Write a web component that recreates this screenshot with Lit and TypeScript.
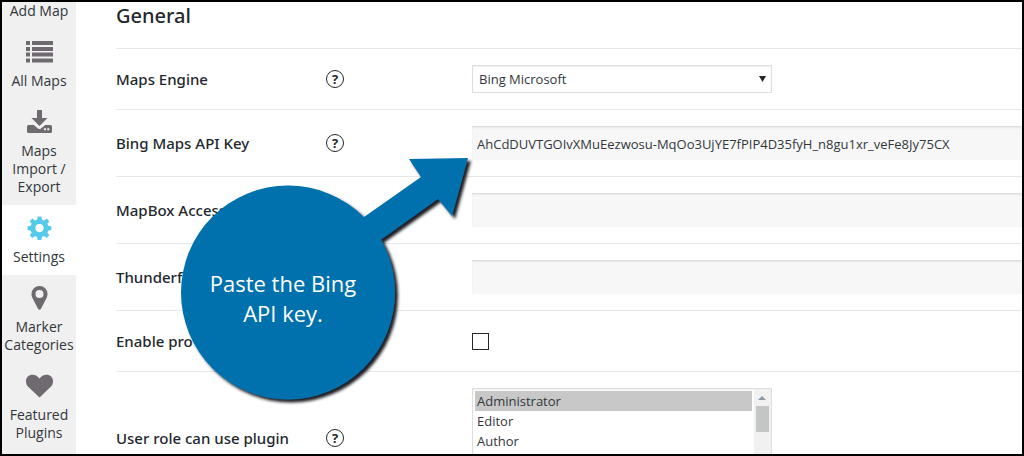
import { LitElement, html, svg, css, nothing, TemplateResult } from "lit";
import { customElement, property } from "lit/decorators.js";

const icons: Record<string, TemplateResult> = {
  list: svg`<path d="M0 1h4v4H0zM0 7h4v4H0zM0 12.500h4v4H0zM0 18.500h4v4H0zM6 1h21v4H6zM6 7h21v4H6zM6 12.500h21v4H6zM6 18.500h21v4H6z"/>`,
  download: svg`<path fill-rule="evenodd" d="M11 0h5v8h5.500L13.500 16 5.500 8H11zM2.500 15h5.200l4.300 3.600q1.500 1 3 0L19.300 15h5.200q1.500 0 1.500 1.500v5q0 1.500-1.500 1.500h-22Q1 23 1 21.500v-5Q1 15 2.500 15zM18 18.300v2h2v-2zm3.300 0v2h2v-2z"/>`,
  gear: svg`<path fill-rule="evenodd" d="M11.600.5h3.800l.6 3.200 2 .8 2.700-1.900 2.600 2.600-1.900 2.600.9 2 3.100.6v3.700l-3.100.6-.9 2 1.900 2.600-2.600 2.600-2.700-1.900-2 .9-.6 3.100h-3.800l-.6-3.100-2-.9-2.700 1.900-2.600-2.600 1.900-2.600-.9-2-3.100-.6v-3.700l3.100-.6.9-2-1.900-2.600 2.600-2.600L9 4.500l2-.8zM13.500 8a4.100 4.100 0 1 0 0 8.200 4.100 4.100 0 0 0 0-8.200z"/>`,
  pin: svg`<path fill-rule="evenodd" d="M13.500 0a7.900 7.900 0 0 1 8 8c0 2-.6 3.300-1.300 4.700l-5.200 10q-1.500 2-3 0l-5.200-10C6.100 11.300 5.500 10 5.500 8a7.900 7.900 0 0 1 8-8zm0 3.900a4 4 0 1 0 0 8 4 4 0 0 0 0-8z"/>`,
  heart: svg`<path d="M13.500 23.500 2.200 12.700C.8 11.200 0 9.500 0 7.400 0 3.200 2.700.8 6.700.8c2.700 0 5 1.400 6.800 3.700C15.300 2.200 17.600.8 20.300.8c4 0 6.700 2.400 6.700 6.600 0 2.100-.8 3.800-2.200 5.300z"/>`,
};

@customElement("nav-item")
class NavItem extends LitElement {
  @property() icon = "";
  @property() label = "";
  @property({ type: Boolean }) active = false;

  static styles = css`
    :host { display: block; }
    .link {
      display: flex; flex-direction: column; align-items: center; gap: 8px;
      padding-bottom: 9px; color: #32373c; text-decoration: none;
      text-align: center; font-size: 14px; line-height: 18px;
    }
    .with-icon { padding-top: 11px; }
    .active { background: #fff; }
    .icon { width: 27px; height: 24px; fill: #6f6a70; }
    .active .icon { fill: #54cbea; }
  `;

  render() {
    return html`<a href="#" class="link ${this.icon ? "with-icon" : ""} ${this.active ? "active" : ""}">
      ${this.icon ? html`<svg class="icon" viewBox="0 0 27 24" aria-hidden="true">${icons[this.icon]}</svg>` : nothing}
      <span>${this.label}</span>
    </a>`;
  }
}

@customElement("app-root")
class AppRoot extends LitElement {
  static styles = css`
    * { box-sizing: border-box; }
    :host {
      display: block; color: #23282d;
      font-family: "Noto Sans", "Open Sans", sans-serif;
    }
    .frame {
      position: relative; display: flex; height: 100vh;
      border: 2px solid #000; overflow: hidden; background: #fff;
    }
    .sidebar { flex: 0 0 74px; background: #f0f0f0; font-family: "Open Sans", sans-serif; }
    .content { flex: 1; min-width: 0; padding-left: 40px; }
    .title {
      margin: 0; height: 47px; padding-bottom: 20px; border-bottom: 1px solid #e6e8e8;
      font-size: 20px; line-height: 27px; font-weight: 500;
    }
    .row {
      display: grid; grid-template-columns: 210px 146px minmax(0, 1fr); align-items: center;
      min-height: 61px; padding: 16px 0; border-bottom: 1px solid #e6e8e8;
    }
    .label { font-size: 15px; line-height: 20px; font-weight: 500; white-space: nowrap; }
    .help {
      display: block; width: 18px; height: 18px; padding: 0; border: 1px solid #23282d; border-radius: 50%;
      background: #fff; color: #23282d; font: 700 13px/16px "Open Sans", sans-serif;
    }
    .engine, .text, .roles { font: 13px/20px "Open Sans", sans-serif; color: #32373c; border-radius: 0; outline: none; }
    .engine-wrap, .roles-wrap { display: grid; width: 300px; align-items: center; }
    .engine {
      grid-area: 1 / 1; appearance: none; height: 28px; width: 300px; padding: 0 6px; background: #fff;
      border: 1px solid #dddfdf; box-shadow: inset 0 1px 2px #0001;
    }
    .arrow { grid-area: 1 / 1; justify-self: end; margin-right: 6px; width: 7px; height: 6px; fill: #23282d; pointer-events: none; }
    .text {
      display: block; width: 100%; height: 34px; padding: 0 5px; background: #f7f7f7;
      border: 0; border-top: 1px solid #dbe0df; box-shadow: inset 0 1px 2px #0001;
    }
    .check { appearance: none; display: block; width: 17px; height: 17px; margin: 0; border: 1px solid #23282d; background: #fff; }
    .roles {
      grid-area: 1 / 1; width: 300px; height: 100px; padding: 2px 19px 2px 2px; background: #fff;
      border: 1px solid #dddfdf; box-shadow: inset 0 1px 2px #0001; scrollbar-width: none;
    }
    .roles option { padding: 1px 2px 0; height: 20px; min-height: 20px; line-height: 19px; }
    .roles option:checked { color: #32373c; background: #c8c8c8 linear-gradient(#c8c8c8, #c8c8c8); }
    .scrollbar {
      grid-area: 1 / 1; justify-self: end; width: 17px; height: 98px; margin: 1px;
      background: #f1f1f1; pointer-events: none;
    }
    .scrollbar path { fill: #8c9aa5; }
    .scrollbar rect { fill: #c4c6c6; }
    .callout { position: absolute; left: 178px; top: 154px; width: 300px; height: 260px; pointer-events: none; }
    .shape { display: block; width: 300px; height: 260px; }
    .message {
      position: absolute; left: 0; top: 112px; width: 206px; margin: 0;
      text-align: center; color: #fff; font: 22px/30px "Open Sans", sans-serif;
    }
  `;

  private row(id: string, label: string, control: TemplateResult, help = true) {
    return html`<div class="row">
      <label class="label" for=${id}>${label}</label>
      <div>${help ? html`<button class="help" type="button" aria-label="Help">?</button>` : nothing}</div>
      ${control}
    </div>`;
  }

  render() {
    return html`<div class="frame">
      <nav class="sidebar">
        <nav-item label="Add Map"></nav-item>
        <nav-item icon="list" label="All Maps"></nav-item>
        <nav-item icon="download" label="Maps Import / Export"></nav-item>
        <nav-item icon="gear" label="Settings" active></nav-item>
        <nav-item icon="pin" label="Marker Categories"></nav-item>
        <nav-item icon="heart" label="Featured Plugins"></nav-item>
      </nav>
      <main class="content">
        <h2 class="title">General</h2>
        ${this.row("engine", "Maps Engine", html`<div class="engine-wrap">
          <select id="engine" class="engine"><option>Bing Microsoft</option></select>
          <svg class="arrow" viewBox="0 0 7 6" aria-hidden="true"><path d="M0 0h7L3.500 6z"/></svg>
        </div>`)}
        ${this.row("bing", "Bing Maps API Key", html`<input id="bing" class="text" type="text" value="AhCdDUVTGOIvXMuEezwosu-MqOo3UjYE7fPIP4D35fyH_n8gu1xr_veFe8Jy75CX">`)}
        ${this.row("mapbox", "MapBox Access", html`<input id="mapbox" class="text" type="text">`, false)}
        ${this.row("thunder", "Thunderf", html`<input id="thunder" class="text" type="text">`, false)}
        ${this.row("progress", "Enable pro", html`<input id="progress" class="check" type="checkbox">`, false)}
        ${this.row("roles", "User role can use plugin", html`<div class="roles-wrap">
          <select id="roles" class="roles" multiple size="4">
            <option selected>Administrator</option>
            <option>Editor</option>
            <option>Author</option>
          </select>
          <svg class="scrollbar" aria-hidden="true"><path d="M8 7 12 11H4z"/><rect x="2" y="17" width="13" height="26"/></svg>
        </div>`)}
      </main>
      <aside class="callout">
        <svg class="shape" viewBox="0 0 300 260" aria-hidden="true">
          <defs>
            <filter id="shade" x="-10%" y="-10%" width="120%" height="120%">
              <feDropShadow dx="3" dy="3" stdDeviation="1.500" flood-color="#1c1a24" flood-opacity="1"/>
            </filter>
          </defs>
          <g filter="url(#shade)" fill="#0071ad">
            <circle cx="108" cy="136.500" r="107"/>
            <path d="M180 64 184 61 241 21 229 3 288 2 272 60 258 43 202 83 190 92Z"/>
          </g>
        </svg>
        <p class="message">Paste the Bing<br>API key.</p>
      </aside>
    </div>`;
  }
}
